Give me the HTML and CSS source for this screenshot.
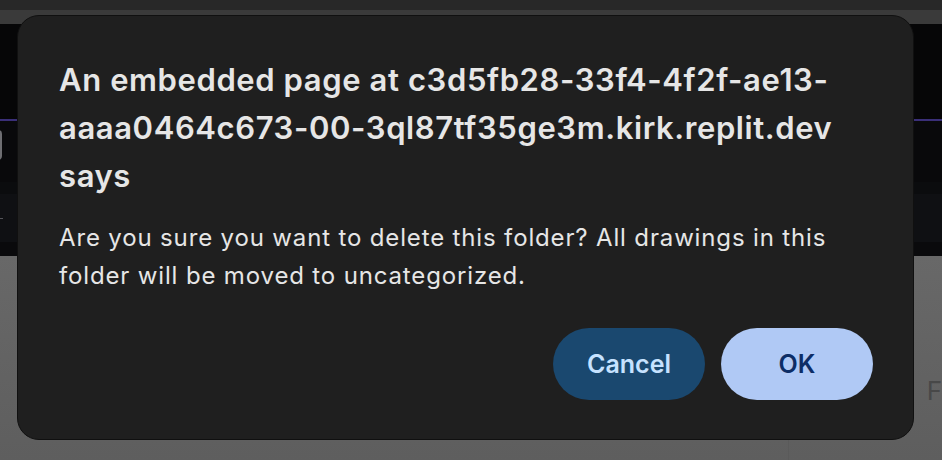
FILE: index.html
```html
<!DOCTYPE html>
<html>
<head>
<meta charset="utf-8">
<link rel="stylesheet" href="styles.css">
</head>
<body>
<div class="page">
  <div class="bar-top"></div>
  <div class="bar-tabs"></div>
  <div class="dark">
    <div class="dark-upper"></div>
    <div class="purple"></div>
    <div class="dark-lower">
      <div class="band b1"></div>
      <div class="band b2"></div>
      <div class="band b3"></div>
      <div class="band b4"></div>
    </div>
    <div class="stub-btn"></div>
    <div class="stub-line"></div>
  </div>
  <div class="gray">
    <div class="gray-main"></div>
    <div class="gray-side"><span class="side-letter">F</span></div>
  </div>
</div>

<div class="dialog" role="alertdialog">
  <h1 class="title">An embedded page at c3d5fb28-33f4-4f2f-ae13-<br>aaaa0464c673-00-3ql87tf35ge3m.kirk.replit.dev<br>says</h1>
  <p class="message">Are you sure you want to delete this folder? All drawings in this<br>folder will be moved to uncategorized.</p>
  <div class="actions">
    <button class="btn btn-cancel">Cancel</button>
    <button class="btn btn-ok">OK</button>
  </div>
</div>
</body>
</html>
```

FILE: styles.css
```css
html, body {
  margin: 0;
  padding: 0;
  width: 942px;
  height: 460px;
  overflow: hidden;
  background: #646464;
  font-family: Inter, "Noto Sans", sans-serif;
}

.page {
  display: flex;
  flex-direction: column;
  width: 942px;
  height: 460px;
}

.bar-top { height: 10px; background: #282828; }
.bar-tabs { height: 14px; background: #3a3a3a; }

.dark {
  position: relative;
  height: 232px;
  display: flex;
  flex-direction: column;
  background: #08080a;
}
.dark-upper { height: 95px; background: #060607; }
.purple { height: 2px; background: #3a2f78; }
.dark-lower { flex: 1; display: flex; flex-direction: column; }
.b1 { height: 61px; background: #09090b; }
.b2 { height: 12px; background: #0b0c0e; }
.b3 { height: 48px; background: #0f1013; }
.b4 { flex: 1; background: #0a0a0c; }

.stub-btn {
  position: absolute;
  left: -10px;
  top: 106px;
  width: 12px;
  height: 30px;
  border-radius: 4px;
  background: #6e6e72;
}
.stub-line {
  position: absolute;
  left: 0;
  top: 194px;
  width: 3px;
  height: 1px;
  background: #55555a;
}

.gray {
  flex: 1;
  display: flex;
  background: linear-gradient(#686868, #5e5e5e);
}
.gray-main { width: 795px; }
.gray-side {
  flex: 1;
  border-left: 1px solid #5a5a5a;
  display: flex;
  align-items: flex-start;
  padding-top: 120px;
  padding-left: 138px;
}
.side-letter {
  color: #484848;
  font-size: 26px;
  line-height: 30px;
}

.dialog {
  position: absolute;
  left: 17px;
  top: 15px;
  width: 897px;
  height: 425px;
  box-sizing: border-box;
  background: #1f1f1f;
  border: 1px solid #101010;
  border-radius: 22px;
  padding: 40px 40px 39px 41px;
  display: flex;
  flex-direction: column;
  color: #e6e6e6;
}

.title {
  margin: 0;
  font-size: 31px;
  font-weight: 600;
  line-height: 48px;
  letter-spacing: 0.6px;
  white-space: nowrap;
}

.message {
  margin: 19px 0 0 0;
  font-size: 24px;
  font-weight: 400;
  line-height: 38px;
  letter-spacing: 0.85px;
  white-space: nowrap;
}

.actions {
  margin-top: auto;
  display: flex;
  justify-content: flex-end;
  gap: 16px;
}

.btn {
  width: 152px;
  height: 72px;
  border: none;
  border-radius: 36px;
  font-family: Inter, "Noto Sans", sans-serif;
  font-size: 25px;
  font-weight: 600;
  padding: 0;
}
.btn-cancel { background: #1a486f; color: #c6e2ff; }
.btn-ok { background: #b0c9f5; color: #0d2d66; }
```
